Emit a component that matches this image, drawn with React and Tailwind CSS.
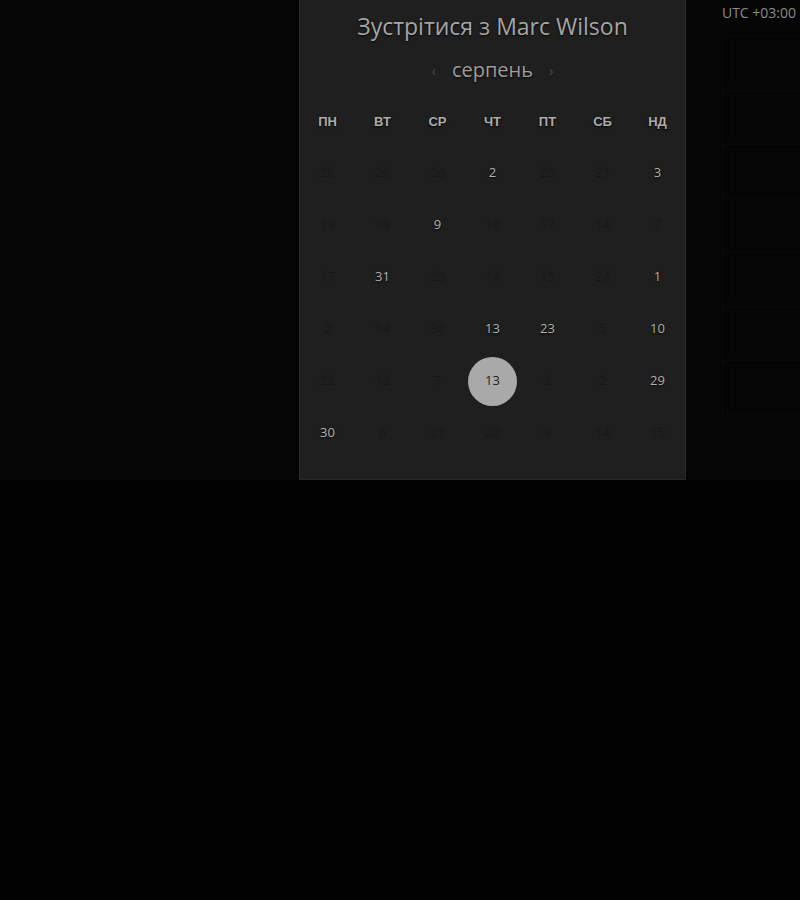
import React from 'react';

const weekdays = ['ПН', 'ВТ', 'СР', 'ЧТ', 'ПТ', 'СБ', 'НД'];

// v = visible day, f = faded, s = selected
const rows = [
  [['30', 'f'], ['26', 'f'], ['26', 'f'], ['2', 'v'], ['20', 'f'], ['21', 'f'], ['3', 'v']],
  [['19', 'f'], ['18', 'f'], ['9', 'v'], ['16', 'f'], ['17', 'f'], ['14', 'f'], ['7', 'f']],
  [['17', 'f'], ['31', 'v'], ['23', 'f'], ['14', 'f'], ['15', 'f'], ['24', 'f'], ['1', 'v']],
  [['2', 'f'], ['14', 'f'], ['30', 'f'], ['13', 'v'], ['23', 'v'], ['5', 'f'], ['10', 'v']],
  [['28', 'f'], ['18', 'f'], ['7', 'f'], ['13', 's'], ['8', 'f'], ['2', 'f'], ['29', 'v']],
  [['30', 'v'], ['6', 'f'], ['21', 'f'], ['20', 'f'], ['9', 'f'], ['14', 'f'], ['15', 'f']],
];

const slots = [36, 90, 145, 200, 257, 306, 360];

const DayCell = ({ label, kind }) => {
  if (kind === 's') {
    return (
      <div className="h-[52px] flex items-center justify-center">
        <div className="w-[49px] h-[49px] rounded-full bg-[#a9a9a9] flex items-center justify-center text-[13px] text-[#222]">
          {label}
        </div>
      </div>
    );
  }
  return (
    <div className="h-[52px] flex items-center justify-center">
      <span
        className={
          kind === 'v'
            ? 'text-[13px] text-[#b0b0b0] [text-shadow:0_1px_2px_rgba(0,0,0,0.9)]'
            : 'text-[13px] text-[#161616] [text-shadow:0_0_1px_rgba(50,50,50,0.5)]'
        }
      >
        {label}
      </span>
    </div>
  );
};

const App = () => {
  return (
    <div className="w-[800px] h-[900px] bg-[#020202] font-['Open_Sans',sans-serif]">
      <div className="h-[480px] bg-[#050505] flex">
        <div className="w-[299px]" />
        <div className="w-[387px] h-[480px] bg-[#1f1f1f] border-x border-b border-[#292929] flex flex-col items-center">
          <div className="mt-[12px] text-[23px] leading-[28px] text-[#a5a5a5] [text-shadow:0_1px_2px_rgba(0,0,0,0.9)]">
            Зустрітися з Marc Wilson
          </div>
          <div className="mt-[16px] flex items-center gap-[16px] h-[28px]">
            <span className="text-[#4a4a4a] text-[15px]">‹</span>
            <span className="text-[20px] text-[#9c9c9c] [text-shadow:0_1px_2px_rgba(0,0,0,0.9)]">серпень</span>
            <span className="text-[#4a4a4a] text-[15px]">›</span>
          </div>
          <div className="mt-[30px] w-full grid grid-cols-7">
            {weekdays.map((d) => (
              <div
                key={d}
                className="h-[16px] flex items-center justify-center text-[13px] font-bold font-['Liberation_Sans',sans-serif] text-[#ababab] [text-shadow:0_1px_2px_rgba(0,0,0,0.9)]"
              >
                {d}
              </div>
            ))}
          </div>
          <div className="mt-[17px] w-full grid grid-cols-7">
            {rows.map((row, i) =>
              row.map(([label, kind], j) => <DayCell key={`${i}-${j}`} label={label} kind={kind} />)
            )}
          </div>
        </div>
        <div className="flex-1 relative">
          <div className="absolute right-[4px] top-[2px] text-[14px] text-[#8a8a8a]">UTC +03:00</div>
          <div className="absolute left-[36px] right-0 top-[36px] flex flex-col">
            {slots.map((y) => (
              <div key={y} className="h-[54px] border-t border-l border-[#0a0a0a]">
                <div className="ml-[8px] mt-[2px] h-[46px] border-l border-[#080808]" />
              </div>
            ))}
            <div className="h-[12px] border-t border-[#0a0a0a]" />
          </div>
        </div>
      </div>
    </div>
  );
};

export default App;
